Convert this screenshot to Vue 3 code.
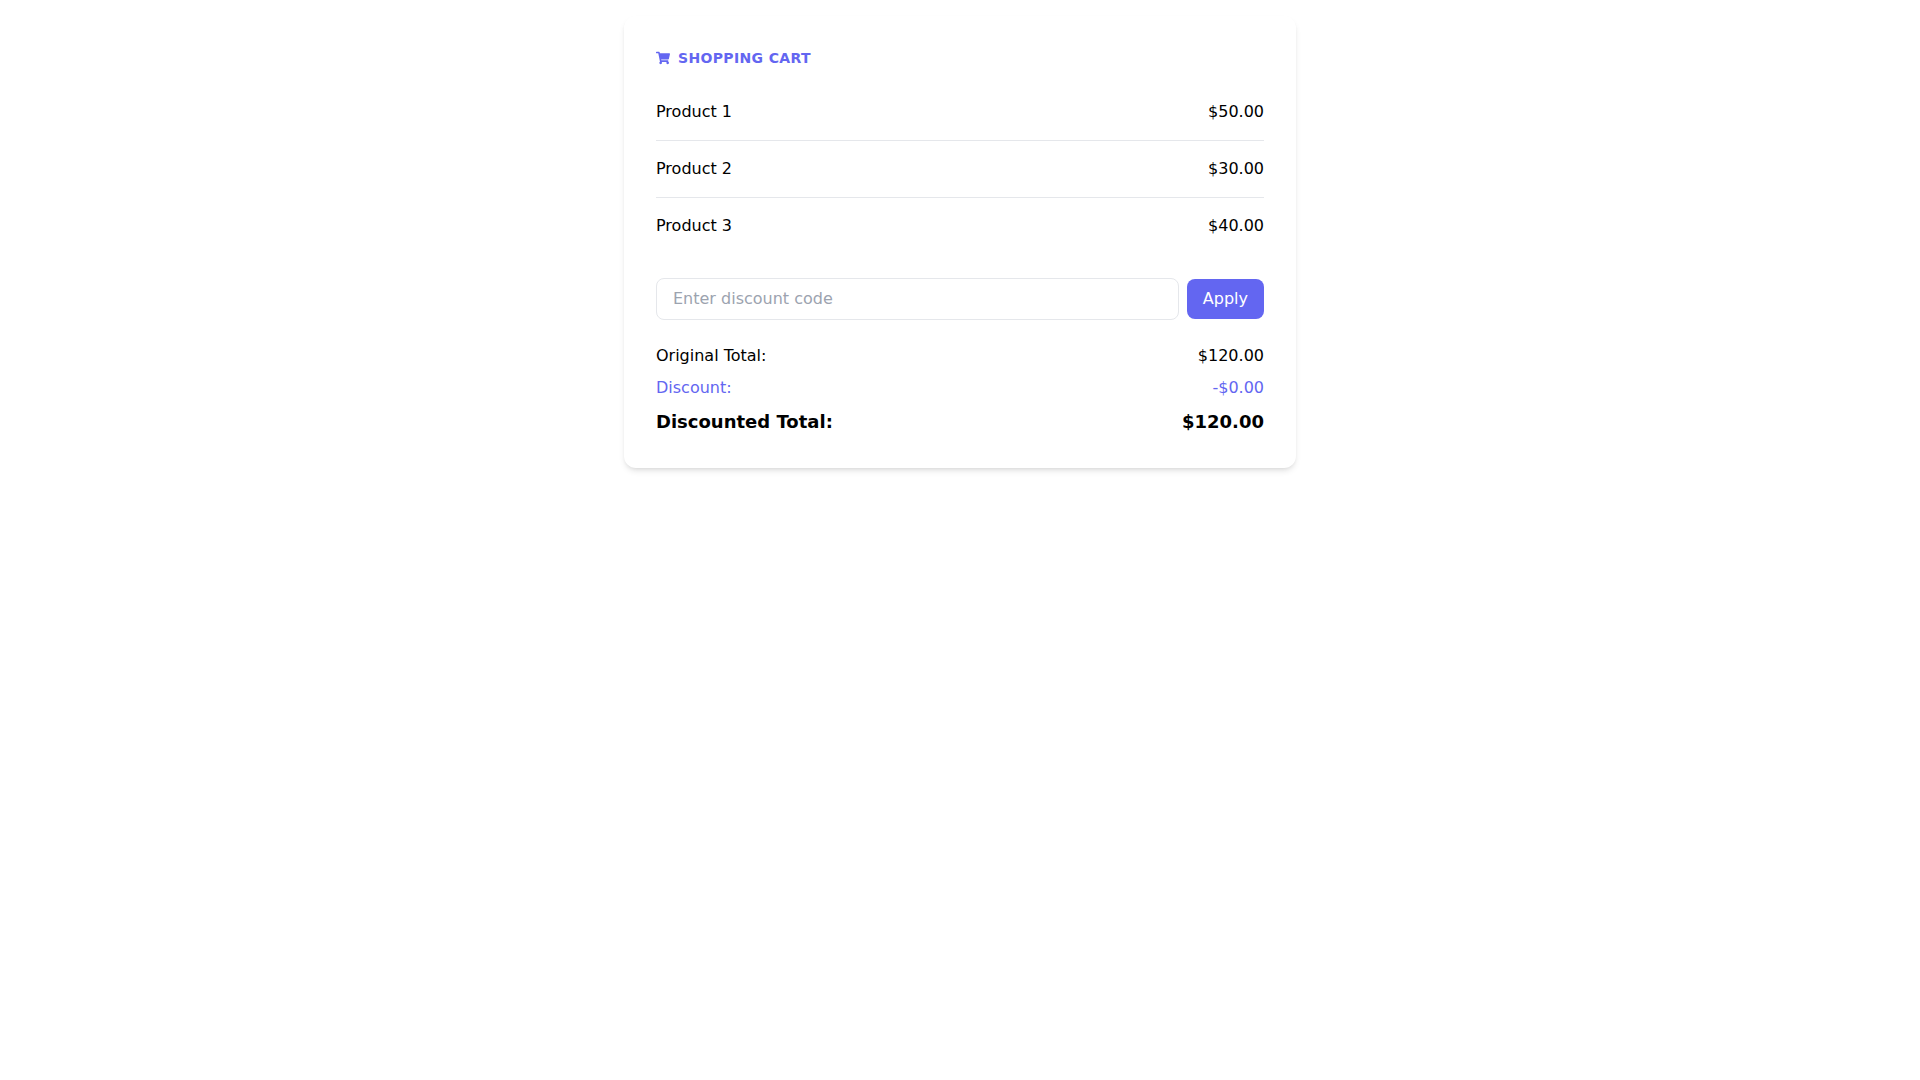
<script setup>
import { computed, ref } from 'vue'

const products = [
  { id: 1, name: 'Product 1', price: 50 },
  { id: 2, name: 'Product 2', price: 30 },
  { id: 3, name: 'Product 3', price: 40 }
]

const code = ref('')
const discount = ref(0)

const total = computed(() => products.reduce((sum, p) => sum + p.price, 0))
const discountedTotal = computed(() => total.value - discount.value)

const money = (value) => `$${value.toFixed(2)}`

function applyCode() {
  discount.value = 0
}
</script>

<template>
  <main class="cart">
    <h1 class="title">
      <svg class="icon" viewBox="0 0 576 512" fill="currentColor" aria-hidden="true">
        <path d="M528.12 301.319l47.273-208C578.806 78.301 567.391 64 551.99 64H159.208l-9.166-44.81C147.758 8.021 137.93 0 126.529 0H24C10.745 0 0 10.745 0 24v16c0 13.255 10.745 24 24 24h69.883l70.248 343.435C147.325 417.1 136 435.222 136 456c0 30.928 25.072 56 56 56s56-25.072 56-56c0-15.674-6.447-29.835-16.824-40h209.647C430.447 426.165 424 440.326 424 456c0 30.928 25.072 56 56 56s56-25.072 56-56c0-22.172-12.888-41.332-31.579-50.405l5.517-24.276c3.413-15.018-8.002-29.319-23.403-29.319H218.117l-6.545-32h293.145c11.206 0 20.92-7.754 23.403-18.681z" />
      </svg>
      <span>Shopping Cart</span>
    </h1>

    <ul class="products">
      <li v-for="product in products" :key="product.id" class="product">
        <span>{{ product.name }}</span>
        <span>{{ money(product.price) }}</span>
      </li>
    </ul>

    <form class="discount-form" @submit.prevent="applyCode">
      <input
        v-model="code"
        class="code"
        type="text"
        aria-label="Discount code"
        placeholder="Enter discount code"
      />
      <button class="apply" type="submit">Apply</button>
    </form>

    <dl class="totals">
      <div class="row">
        <dt>Original Total:</dt>
        <dd>{{ money(total) }}</dd>
      </div>
      <div class="row row-discount">
        <dt>Discount:</dt>
        <dd>-{{ money(discount) }}</dd>
      </div>
      <div class="row row-final">
        <dt>Discounted Total:</dt>
        <dd>{{ money(discountedTotal) }}</dd>
      </div>
    </dl>
  </main>
</template>

<style>
body {
  background: #fff;
}
</style>

<style scoped>
.cart {
  box-sizing: border-box;
  max-width: 672px;
  margin: 16px auto;
  padding: 32px;
  border-radius: 12px;
  background: #fff;
  box-shadow: 0 4px 6px -1px rgb(0 0 0 / 0.1), 0 2px 4px -2px rgb(0 0 0 / 0.1);
  color: #000;
  font-family: "DejaVu Sans", sans-serif;
  font-size: 16px;
  line-height: 24px;
}

.title {
  display: flex;
  align-items: center;
  gap: 8px;
  margin: 0 0 16px;
  color: #6366f1;
  font-size: 14px;
  font-weight: 600;
  line-height: 20px;
  letter-spacing: 0.025em;
  text-transform: uppercase;
}

.icon {
  width: 14px;
  height: 14px;
}

.products {
  margin: 0 0 24px;
  padding: 0;
  list-style: none;
}

.product {
  display: flex;
  justify-content: space-between;
  padding: 16px 0;
}

.product + .product {
  border-top: 1px solid #e5e7eb;
}

.discount-form {
  display: flex;
  align-items: center;
  gap: 8px;
  margin-bottom: 24px;
}

.code,
.apply {
  padding: 8px 16px;
  border-radius: 8px;
  font: inherit;
}

.code {
  flex: 1;
  min-width: 0;
  border: 1px solid #e5e7eb;
  background: #fff;
  color: inherit;
}

.code::placeholder {
  color: #9ca3af;
}

.apply {
  border: 0;
  background: #6366f1;
  color: #fff;
  cursor: pointer;
}

.totals {
  display: flex;
  flex-direction: column;
  gap: 8px;
  margin: 0;
}

.row {
  display: flex;
  justify-content: space-between;
}

.row dd {
  margin: 0;
}

.row-discount {
  color: #6366f1;
}

.row-final {
  font-size: 18px;
  font-weight: 700;
  line-height: 28px;
}
</style>
